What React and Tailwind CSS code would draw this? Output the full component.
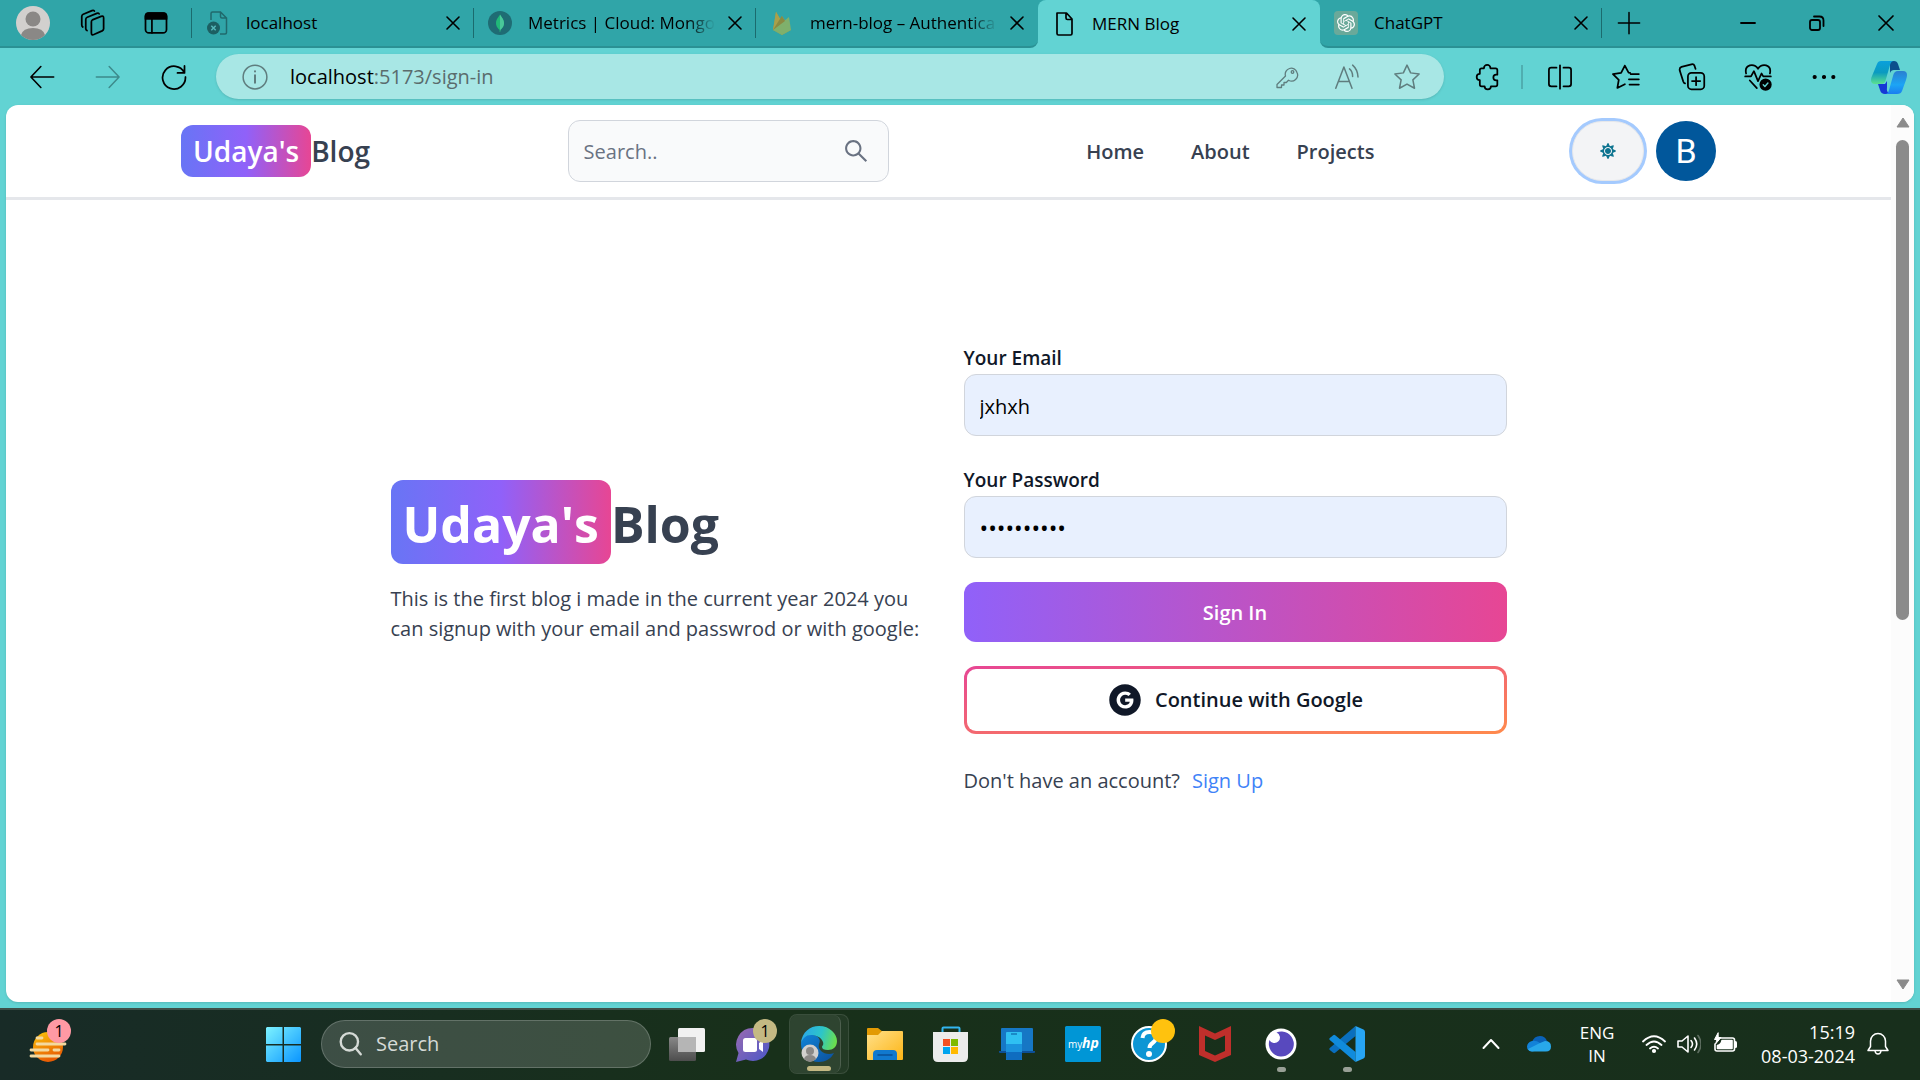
import React from "react";
import { AiOutlineSearch, AiFillGoogleCircle } from "react-icons/ai";
import { FaSun } from "react-icons/fa";
import { SiOpenai } from "react-icons/si";

function Line({ size = "size-[30px]", className = "", children, sw = 1.3 }) {
  return (
    <svg
      viewBox="0 0 24 24"
      fill="none"
      stroke="currentColor"
      strokeWidth={sw}
      strokeLinecap="round"
      strokeLinejoin="round"
      aria-hidden="true"
      className={`${size} shrink-0 ${className}`}
    >
      {children}
    </svg>
  );
}

/* ---------- tab strip ---------- */

const Cross = () => (
  <Line size="size-6" sw={1.6}>
    <path d="M6 6l12 12M18 6L6 18" />
  </Line>
);

const BrokenPage = () => (
  <svg viewBox="0 0 24 24" className="size-6 shrink-0" fill="none" aria-hidden="true">
    <path d="M5 9V2.500Q5 1 6.500 1h8L20.500 7v14.500q0 1.500-1.500 1.500h-5M14.500 1v4.500q0 1.500 1.500 1.500h4.500" stroke="#20696c" strokeWidth="1.500" />
    <circle cx="7.500" cy="17" r="6.500" fill="#1c5f62" />
    <path d="M5.300 14.800l4.400 4.400m0-4.400l-4.400 4.400" stroke="#56b8ba" strokeWidth="1.500" />
  </svg>
);

const Mongo = () => (
  <svg viewBox="0 0 24 24" className="size-6 shrink-0" aria-hidden="true">
    <circle cx="12" cy="12" r="12" fill="#1f6c74" />
    <path d="M12 3.500c.8 2 4 4.300 4 8.500 0 4-2.600 5.900-3.600 6.800L12.200 21h-.5l-.2-2.200C10.500 17.900 8 16 8 12c0-4.200 3.200-6.500 4-8.500z" fill="#21b978" />
    <path d="M12 3.500c.8 2 4 4.300 4 8.500 0 4-2.600 5.900-3.600 6.800L12 21z" fill="#4ac79a" />
  </svg>
);

const Firebase = () => (
  <svg viewBox="0 0 24 24" className="size-6 shrink-0" aria-hidden="true">
    <path d="M3 19L6 .800l4 7.200 2-3 9 14-9 5z" fill="#9c9a4c" />
    <path d="M3 19L6 .800 12.500 12z" fill="#aaa04a" />
    <path d="M3 19L19 6l2 13-9 5z" fill="#7fb06c" />
    <path d="M3 19l8.800-14L15 10z" fill="#8a8a42" />
  </svg>
);

const Page = () => (
  <Line size="size-6" sw={1.7}>
    <path d="M5 1h9.500L20 7v14.500q0 1.500-1.500 1.500h-12Q5 23 5 21.500zM14 1v5q0 1.500 1.500 1.500H20" />
  </Line>
);

const Gpt = () => (
  <span className="flex size-6 shrink-0 items-center justify-center rounded bg-[#6aa99a] text-white">
    <SiOpenai className="size-[18px]" />
  </span>
);

function Tab({ icon, title, active, fade, divider = true }) {
  return (
    <div
      className={`flex h-12 w-[282px] min-w-0 items-center gap-4 pl-[14px] ${
        active ? "rounded-t-lg bg-[#62d3d3]" : ""
      }`}
    >
      {icon}
      <span
        className={`min-w-0 flex-1 whitespace-nowrap text-[17px] leading-6 ${
          fade ? "mask-[linear-gradient(to_right,black_85%,transparent)]" : ""
        }`}
      >
        {title}
      </span>
      <button type="button" aria-label={`Close ${title}`} className="-ml-2">
        <Cross />
      </button>
      <span className={`-ml-2 h-[30px] w-px ${divider ? "bg-[#1b6b6e]" : ""}`} />
    </div>
  );
}

function TabStrip() {
  return (
    <div className="flex h-12 bg-[linear-gradient(#30a5a8_50%,#62d3d3_50%)]">
      <div className="flex min-w-0 items-center rounded-br-lg border-b-2 border-[#2a9194] bg-[#30a5a8]">
        <button type="button" aria-label="Profile" className="ml-4 shrink-0">
          <svg viewBox="0 0 34 34" className="size-[34px]" aria-hidden="true">
            <circle cx="17" cy="17" r="17" fill="#d2d0ce" />
            <circle cx="17" cy="13" r="7.500" fill="#8a8886" />
            <path d="M5 29q2-7 12-7t12 7q-5 5-12 5T5 29z" fill="#8a8886" />
          </svg>
        </button>
        <button type="button" aria-label="Workspaces" className="ml-7">
          <Line size="size-[30px]" sw={1.4}>
            <path d="M11.500 9.500l7-2.800q2-.7 2 1.200v8.600q0 1.200-1.200 1.800l-6.600 2.900q-2 .8-2-1.200v-8.700q0-1.300.8-1.800z" />
            <path d="M7.200 18q-1-.5-1-1.700V9.200q0-1.300 1.200-1.800L15 4.300q1.300-.5 1.900.4M3.800 15.200Q3 14.600 3 13.400V6.800Q3 5.600 4.200 5l7-2.900q1.200-.5 1.900.3" />
          </Line>
        </button>
        <button type="button" aria-label="Tab actions" className="ml-[33px]">
          <Line size="size-[28px]" className="mx-px" sw={1.5}>
            <rect x="3" y="3.500" width="18" height="17" rx="3" />
            <path d="M3 8.500V6q0-2.500 2.500-2.500h13Q21 3.500 21 6v2.500z" fill="currentColor" />
            <path d="M8.500 9v11.500" />
          </Line>
        </button>
        <span className="ml-5 h-[30px] w-px shrink-0 bg-[#1b6b6e]" />
        <Tab icon={<BrokenPage />} title="localhost" />
        <Tab icon={<Mongo />} title="Metrics | Cloud: Mongo" fade />
        <Tab icon={<Firebase />} title="mern-blog – Authentica" fade divider={false} />
      </div>
      <Tab icon={<Page />} title="MERN Blog" active divider={false} />
      <div className="flex min-w-0 flex-1 items-center rounded-bl-lg border-b-2 border-[#2a9194] bg-[#30a5a8]">
        <Tab icon={<Gpt />} title="ChatGPT" />
        <button type="button" aria-label="New tab" className="ml-3">
          <Line size="size-[30px]" sw={1.2}>
            <path d="M12 3.500v17M3.500 12h17" />
          </Line>
        </button>
        <div className="ml-auto flex h-full shrink-0">
          <button type="button" aria-label="Minimize" className="flex w-[69px] items-center justify-center">
            <Line size="size-6" sw={1.8}>
              <path d="M5 12h14" />
            </Line>
          </button>
          <button type="button" aria-label="Restore" className="flex w-[69px] items-center justify-center">
            <Line size="size-6" sw={1.8}>
              <rect x="5" y="9" width="10" height="10" rx="2" />
              <path d="M9 5.500h5.500q4 0 4 4V15" />
            </Line>
          </button>
          <button type="button" aria-label="Close window" className="flex w-[69px] items-center justify-center">
            <Line size="size-6" sw={1.7}>
              <path d="M5 5l14 14M19 5L5 19" />
            </Line>
          </button>
        </div>
      </div>
    </div>
  );
}

/* ---------- address bar ---------- */

function ToolButton({ label, children, className = "w-[66px]" }) {
  return (
    <button type="button" aria-label={label} className={`flex shrink-0 items-center justify-center ${className}`}>
      {children}
    </button>
  );
}

const Copilot = () => (
  <svg viewBox="0 0 36 34" className="h-[34px] w-9" aria-hidden="true">
    <defs>
      <linearGradient id="cpA" x1="0" y1="0" x2="0" y2="1">
        <stop offset="0" stopColor="#0aa0dc" />
        <stop offset=".5" stopColor="#0b9bc0" />
        <stop offset="1" stopColor="#5be08f" />
      </linearGradient>
      <linearGradient id="cpB" x1="0" y1="0" x2="0" y2="1">
        <stop offset="0" stopColor="#2a7fd0" />
        <stop offset=".6" stopColor="#1ca5f5" />
        <stop offset="1" stopColor="#1a7df0" />
      </linearGradient>
    </defs>
    <path d="M19 1h4q3 0 4 3l2 6h-6q-3 0-4 3z" fill="#0b4f8c" />
    <path d="M7 24h7l2-3v6q-1 6 4 7h-6q-4 0-5-4z" fill="#1538d6" />
    <path d="M10 1h13q-3 0-4 4l-4 14q-1 5-5 5H4q-4 0-4-4 0-2 1-4L6 4q1-3 4-3z" fill="url(#cpA)" />
    <path d="M26 34H14q3 0 4-4l4-14q1-5 5-5h5q4 0 4 4 0 2-1 5l-4 11q-1 3-5 3z" fill="url(#cpB)" />
  </svg>
);

function Toolbar() {
  return (
    <div className="flex h-[57px] shrink-0 items-center bg-[#62d3d3]">
      <ToolButton label="Back" className="ml-[9px] w-[66px]">
        <Line size="size-7" sw={1.4}>
          <path d="M22 12H3M11 3L2.500 12l8.500 9" />
        </Line>
      </ToolButton>
      <ToolButton label="Forward" className="w-[66px] text-[#3d8b8c]">
        <Line size="size-7" sw={1.3}>
          <path d="M2 12H21M13 3l8.500 9-8.500 9" />
        </Line>
      </ToolButton>
      <ToolButton label="Refresh">
        <Line size="size-7" sw={1.5}>
          <path d="M20.800 8.200A9.800 9.800 0 1 0 21.800 12M21 2.500v6h-6" />
        </Line>
      </ToolButton>
      <div className="ml-[9px] flex h-[45px] min-w-0 flex-1 items-center rounded-full bg-[#a8e7e5] pl-6 text-[#5f7d7e] shadow-sm">
        <Line sw={1.2}>
          <circle cx="12" cy="12" r="9.500" />
          <path d="M12 10.500v6M12 7.400v.2" strokeWidth="1.600" />
        </Line>
        <button type="button" aria-label="Address" className="ml-5 flex-1 truncate text-left text-[20px] leading-7 text-[#5a6c6d]">
          <span className="text-black">localhost</span>:5173/sign-in
        </button>
        <button type="button" aria-label="Saved passwords" className="w-[60px]">
          <Line size="size-6" className="mx-auto" sw={1.3}>
            <path d="M22 7.500A6 6 0 1 0 10.500 11L2 19.500V22.500h4.500V20H9v-2.500h2.300l2.200-2.300A6 6 0 0 0 22 7.500z" />
            <circle cx="17.500" cy="7" r="1.300" />
          </Line>
        </button>
        <button type="button" aria-label="Read aloud" className="w-[60px]">
          <Line size="size-[30px]" className="mx-auto" sw={1.2}>
            <path d="M3 21L9.500 4 16 21M5.200 15.500h8.600M14 5.500q2.500 2 2.500 6M16.500 2.500q4 3.500 4.300 9.500" />
          </Line>
        </button>
        <button type="button" aria-label="Add to favorites" className="mr-[7px] w-[60px]">
          <Line className="mx-auto" sw={1.2}>
            <path d="M12 2.500l2.900 6.200 6.800.9-5 4.700 1.300 6.700-6-3.300L6 21l1.300-6.700-5-4.700 6.800-.9z" />
          </Line>
        </button>
      </div>
      <ToolButton label="Extensions" className="ml-[11px] w-[66px]">
        <Line size="size-7" sw={1.5}>
          <path d="M8.500 4.500a2.800 2.800 0 0 1 5.600 0H18.500q1.500 0 1.500 1.500v4h-1a2.400 2.400 0 0 0 0 4.800h1V18.500q0 1.500-1.500 1.500H14.500a2.700 2.700 0 0 1-5.400 0H6.500Q5 20 5 18.500v-3.800a2.700 2.700 0 0 1 0-5.400V6q0-1.500 1.500-1.500z" />
        </Line>
      </ToolButton>
      <span className="mr-1 h-6 w-0.5 bg-[#50aeb0]" />
      <ToolButton label="Split screen">
        <Line size="size-7" sw={1.5}>
          <path d="M9 4H4.500q-2 0-2 2v12q0 2 2 2H9M15 4h4.500q2 0 2 2v12q0 2-2 2H15M12 2v20" />
        </Line>
      </ToolButton>
      <ToolButton label="Favorites">
        <Line size="size-7" sw={1.5}>
          <path d="M15.500 8.500L14.200 8.300 11 2.200 7.800 8.500.8 9.500l5 4.900-1.200 7 6.400-3.200M16 9.500h7M14.500 14H23M15 18.500h8" />
        </Line>
      </ToolButton>
      <ToolButton label="Collections">
        <Line size="size-7" sw={1.5}>
          <rect x="8.500" y="8.500" width="14" height="14" rx="3" />
          <path d="M15.500 12v7M12 15.500h7M6 17.500q-1-.3-1.500-1.700L1.500 6.500Q1 4 3 3.300l8.500-2.200q2-.5 2.700 1.400L15 5" />
        </Line>
      </ToolButton>
      <ToolButton label="Browser essentials">
        <Line size="size-7" sw={1.5}>
          <path d="M1.800 9Q.500 3.500 5 2q4.500-1 7 3 2.500-4 7-3 4.500 1.500 3.200 7M1 11.500h5l2.500-4.500 3.500 8.500L15 9l1.500 2.500H23M5 15l6 6.500" />
          <circle cx="18.500" cy="18.500" r="4.500" fill="currentColor" />
          <path d="M16.500 18.700l1.400 1.400 2.600-3" stroke="#62d3d3" strokeWidth="1.200" />
        </Line>
      </ToolButton>
      <ToolButton label="Settings and more">
        <Line size="size-7" sw={1}>
          <g fill="currentColor">
            <circle cx="4" cy="12" r="1.300" />
            <circle cx="12" cy="12" r="1.300" />
            <circle cx="20" cy="12" r="1.300" />
          </g>
        </Line>
      </ToolButton>
      <ToolButton label="Copilot" className="w-[63px]">
        <Copilot />
      </ToolButton>
    </div>
  );
}

/* ---------- blog page ---------- */

function Navbar() {
  return (
    <header className="border-b-[3px] border-gray-200 px-[175px]">
      <div className="flex h-[92px] items-center justify-between">
        <a href="#home" className="flex items-center whitespace-nowrap text-[28px] font-semibold text-[#374151]">
          <span className="flex h-[52px] items-center rounded-xl bg-linear-to-r/srgb from-[#6875f5] via-[#9061f9] to-[#e74694] px-3 text-white">
            Udaya's
          </span>
          Blog
        </a>
        <form className="flex h-[62px] w-[321px] items-center rounded-xl border border-gray-300 bg-gray-50 pl-[15px] pr-[18px]">
          <input
            type="text"
            aria-label="Search"
            placeholder="Search.."
            className="min-w-0 flex-1 bg-transparent pt-0.5 text-[20px] outline-none placeholder:text-gray-500"
          />
          <AiOutlineSearch className="size-[28px] text-gray-500" />
        </form>
        <nav className="flex gap-[47px] pt-0.5 text-[20px] font-semibold text-[#374151]">
          <a href="#home">Home</a>
          <a href="#about">About</a>
          <a href="#projects">Projects</a>
        </nav>
        <div className="flex items-center gap-3">
          <button
            type="button"
            aria-label="Toggle theme"
            className="flex h-[60px] w-[72px] items-center justify-center rounded-full border border-gray-200 bg-gray-100 text-[#0e7490] ring-3 ring-[#a4cafe]"
          >
            <FaSun className="size-4" />
          </button>
          <button
            type="button"
            aria-label="Account"
            className="flex size-[60px] items-center justify-center rounded-full bg-[#01579b] font-[Roboto] text-[34px] leading-none text-white"
          >
            B
          </button>
        </div>
      </div>
    </header>
  );
}

const field =
  "h-[62px] w-full rounded-xl border border-gray-300 bg-[#e8f0fe] px-[15px] pt-0.5 text-black outline-none";

function SignIn() {
  return (
    <main className="mx-auto flex w-full max-w-[1152px] items-center gap-[30px] px-[18px] pt-[143px]">
      <section className="flex-1 pb-4">
        <h1 className="flex items-center text-[50px] font-bold text-[#374151]">
          <span className="flex h-[84px] items-center rounded-xl bg-linear-to-r/srgb from-[#6875f5] via-[#9061f9] to-[#e74694] px-3 pt-1.5 text-white">
            Udaya's
          </span>
          <span className="pt-1.5">Blog</span>
        </h1>
        <p className="mt-5 whitespace-nowrap text-[20px] leading-[30px] text-[#374151]">
          This is the first blog i made in the current year 2024 you
          <br />
          can signup with your email and passwrod or with google:
        </p>
      </section>
      <section className="flex-1">
        <form className="flex flex-col gap-6">
          <div>
            <label htmlFor="email" className="block text-[19px] font-semibold leading-[31px] text-gray-900">
              Your Email
            </label>
            <input id="email" type="text" defaultValue="jxhxh" className={`${field} text-[20px]`} />
          </div>
          <div className="mt-[5px]">
            <label htmlFor="password" className="block text-[19px] font-semibold leading-[31px] text-gray-900">
              Your Password
            </label>
            <input id="password" type="password" defaultValue="abcdefghij" className={`${field} text-[23px]`} />
          </div>
          <button
            type="submit"
            className="h-[60px] rounded-xl bg-linear-to-r/srgb from-[#9061f9] to-[#e74694] pt-0.5 text-[20px] font-semibold text-white"
          >
            Sign In
          </button>
          <button type="button" className="h-[68px] rounded-xl bg-linear-to-br/srgb from-[#e74694] to-[#ff8a4c] p-[3px]">
            <span className="flex h-full items-center justify-center gap-3 rounded-[9px] bg-white text-[20px] font-semibold text-gray-900">
              <AiFillGoogleCircle className="size-9" />
              Continue with Google
            </span>
          </button>
        </form>
        <p className="mt-8 text-[20px] leading-[30px] text-[#374151]">
          Don't have an account?
          <a href="#sign-up" className="ml-3 text-[#3f83f8]">
            Sign Up
          </a>
        </p>
      </section>
    </main>
  );
}

function Viewport() {
  return (
    <div className="min-h-0 flex-1 bg-[#62d3d3] px-1.5 pb-1.5">
      <div className="flex h-full overflow-hidden rounded-xl bg-white shadow-sm">
        <div className="min-w-0 flex-1 overflow-hidden">
          <Navbar />
          <SignIn />
        </div>
        <div className="flex w-[23px] flex-col items-center bg-[#fcfcfc] py-3 text-[#8b8b8b]">
          <svg viewBox="0 0 14 11" className="h-[11px] w-3.5" aria-hidden="true">
            <path d="M7 1l6 9H1z" fill="currentColor" stroke="currentColor" strokeLinejoin="round" />
          </svg>
          <div className="my-3 flex min-h-0 w-[13px] flex-1 flex-col">
            <div className="h-[58%] rounded-full bg-[#8b8b8b]" />
          </div>
          <svg viewBox="0 0 14 11" className="h-[11px] w-3.5" aria-hidden="true">
            <path d="M7 10l6-9H1z" fill="currentColor" stroke="currentColor" strokeLinejoin="round" />
          </svg>
        </div>
      </div>
    </div>
  );
}

/* ---------- taskbar ---------- */

function App36({ label, children, dot, badge }) {
  return (
    <button type="button" aria-label={label} className="relative flex h-[60px] w-[66px] shrink-0 items-center justify-center">
      <svg viewBox="0 0 36 36" className="size-9 overflow-visible" aria-hidden="true">
        {children}
      </svg>
      {badge && (
        <span className="absolute right-[9px] top-[5px] flex size-6 items-center justify-center rounded-full bg-[#c4b983] text-[16px] leading-none text-black">
          {badge}
        </span>
      )}
      {dot && <span className="absolute bottom-0.5 h-[5px] w-[9px] rounded-full bg-[#98a096]" />}
    </button>
  );
}

function EdgeButton() {
  return (
    <button type="button" aria-label="Microsoft Edge" className="relative mx-[3px] flex h-[60px] w-[60px] shrink-0 rounded-lg border border-white/10 bg-white/5 pr-[7px]">
      <span className="flex h-full w-[52px] items-center justify-center rounded-lg border-r border-white/15 bg-white/5 pl-2">
        <svg viewBox="0 0 36 36" className="size-9 shrink-0" aria-hidden="true">
          <defs>
            <linearGradient id="edA" x1="0" y1=".3" x2="1" y2=".5">
              <stop offset="0" stopColor="#2aa7ea" />
              <stop offset=".55" stopColor="#2dc5c8" />
              <stop offset="1" stopColor="#6be04c" />
            </linearGradient>
            <linearGradient id="edB" x1="0" y1="0" x2="1" y2="1">
              <stop offset="0" stopColor="#0f84d8" />
              <stop offset="1" stopColor="#0c4f9c" />
            </linearGradient>
          </defs>
          <path d="M0 18C0 11 6 8 12 9c6 1 8 5 6 9-2 7 7 12 15 9-3 6-9 9-15 9C8 36 0 28 0 18z" fill="url(#edB)" />
          <path d="M0 17C1 6 9 0 18 0c11 0 18 8 18 15 0 6-4 9-9 9-4 0-6-1-6-3 0-1 2-2 1-5-2-5-7-7-12-7-5 0-8 3-10 8z" fill="url(#edA)" />
          <circle cx="9" cy="27" r="8.500" fill="#d2d0ce" />
          <circle cx="9" cy="25" r="4" fill="#8a8886" />
          <path d="M3 33q1-4 6-4t6 4q-3 3-6 3t-6-3z" fill="#8a8886" />
        </svg>
      </span>
      <span className="absolute bottom-0.5 left-[17px] h-[5px] w-6 rounded-full bg-[#c4b983]" />
    </button>
  );
}

function Taskbar() {
  return (
    <footer className="flex h-[72px] shrink-0 items-center border-t-2 border-[#3d4f48] bg-linear-to-r from-[#182b27] via-[#18301a] via-40% to-[#182f1c] pb-0.5 text-white">
      <button type="button" aria-label="Weather" className="relative ml-7 h-[50px] w-12 shrink-0">
        <svg viewBox="0 0 48 50" className="h-[50px] w-12" aria-hidden="true">
          <defs>
            <linearGradient id="sun" x1="0" y1="0" x2=".4" y2="1">
              <stop offset="0" stopColor="#fbc60a" />
              <stop offset="1" stopColor="#e85d04" />
            </linearGradient>
          </defs>
          <circle cx="20" cy="28" r="15" fill="url(#sun)" />
          <g stroke="#f3d9a0" strokeWidth="2.800" strokeLinecap="round">
            <path d="M9 19h5M9 25h28M3 31h17M26 31h5M3 37h28" />
          </g>
        </svg>
        <span className="absolute left-[19px] top-0 flex size-6 items-center justify-center rounded-full bg-[#ff99a4] text-[16px] leading-none text-black">1</span>
      </button>
      <div className="flex min-w-0 items-center pl-[157px]">
        <button type="button" aria-label="Start" className="flex w-[66px] shrink-0 justify-start pl-[33px]">
          <svg viewBox="0 0 35 35" className="size-[35px] shrink-0" aria-hidden="true">
            <defs>
              <linearGradient id="win" gradientUnits="userSpaceOnUse" x1="0" y1="0" x2="35" y2="35">
                <stop offset="0" stopColor="#7df3ff" />
                <stop offset="1" stopColor="#0a95ff" />
              </linearGradient>
            </defs>
            <path d="M1 0h15.500v17H0V1zM18 0h16l1 1v16H18zM0 18.500h16.500V35H1l-1-1zM18 18.500h17V34l-1 1H18z" fill="url(#win)" />
          </svg>
        </button>
        <button type="button" className="ml-[22px] flex h-12 w-[330px] items-center gap-3 rounded-full border border-white/20 bg-white/16 pl-[15px] text-[20px] text-[#d5dad6]">
          <Line size="size-[26px]" className="ml-px" sw={2.200}>
            <circle cx="10.500" cy="10" r="8" />
            <path d="M16 15.500l5 6" />
          </Line>
          Search
        </button>
        <div className="ml-[3px] flex items-center">
          <App36 label="Task view">
            <defs>
              <linearGradient id="tv" x1="0" y1="0" x2="0" y2="1">
                <stop offset="0" stopColor="#888" />
                <stop offset="1" stopColor="#4d4d4d" />
              </linearGradient>
            </defs>
            <rect x="0" y="11" width="27" height="24" rx="1.500" fill="url(#tv)" />
            <rect x="9" y="2" width="27" height="24" rx="1.500" fill="#f1f1f1" />
            <path d="M9 11h18v15H10q-1 0-1-1z" fill="#b5b5b5" />
          </App36>
          <App36 label="Chat" badge="1">
            <defs>
              <linearGradient id="chat" x1="0" y1="0" x2="1" y2="1">
                <stop offset="0" stopColor="#9a6bb0" />
                <stop offset="1" stopColor="#4a57c8" />
              </linearGradient>
            </defs>
            <path d="M18 2a16.500 16.500 0 1 1-7 31.500L1 36l2.500-9A16.500 16.500 0 0 1 18 2z" fill="url(#chat)" />
            <rect x="8" y="12" width="14" height="14" rx="2.500" fill="#fff" />
            <path d="M24 17l4-3v12l-4-3z" fill="#fff" />
          </App36>
          <EdgeButton />
          <App36 label="File Explorer">
            <defs>
              <linearGradient id="fe" x1="0" y1="0" x2="1" y2="1">
                <stop offset="0" stopColor="#ffe08a" />
                <stop offset="1" stopColor="#fdb515" />
              </linearGradient>
            </defs>
            <path d="M0 3q0-1 1-1h10l5 4v6H0z" fill="#e29a04" />
            <path d="M0 9h11l4-4h20q1 0 1 1v27q0 1-1 1H1q-1 0-1-1z" fill="url(#fe)" />
            <path d="M6 34v-6q0-4 4-4h16q4 0 4 4v6z" fill="#1179cf" />
            <path d="M11 29h14" stroke="#0a4f96" strokeWidth="1.500" strokeLinecap="round" />
          </App36>
          <App36 label="Microsoft Store">
            <path d="M9.500 8V2.500q0-1 1-1h15q1 0 1 1V8" fill="none" stroke="#32b5f0" strokeWidth="2" />
            <path d="M0 6h35v25q0 5-5 5H5q-5 0-5-5z" fill="#ececec" />
            <rect x="10" y="13" width="7" height="7" fill="#f25022" />
            <rect x="18" y="13" width="7" height="7" fill="#7fba00" />
            <rect x="10" y="21" width="7" height="7" fill="#00a4ef" />
            <rect x="18" y="21" width="7" height="7" fill="#ffb900" />
          </App36>
          <App36 label="Phone Link">
            <path d="M2 3q0-1 1-1h30q1 0 1 1v22H2z" fill="#1677c5" />
            <path d="M0 25h36v1q0 1-1 1H1q-1 0-1-1z" fill="#0d4f97" />
            <rect x="7" y="6" width="16" height="28" rx="1" fill="#2fc0f2" />
            <path d="M7 18h16v9H7z" fill="#1b93dd" />
            <path d="M7 26h16v7q0 1-1 1H8q-1 0-1-1z" fill="#0f6dc0" />
            <path d="M12 8h6" stroke="#1479b9" strokeWidth="1.500" />
          </App36>
          <App36 label="myHP">
            <rect width="36" height="36" rx="1.500" fill="#0096d6" />
            <text x="3" y="22" fontSize="10" fill="#fff">my</text>
            <text x="17" y="22" fontSize="14" fontWeight="700" fontStyle="italic" fill="#fff">hp</text>
          </App36>
          <App36 label="HP Support Assistant">
            <circle cx="18" cy="18" r="17" fill="#0d96d4" stroke="#fff" strokeWidth="2" />
            <path d="M11.500 12q.5-6 7-6 6.500 0 6.500 5.500 0 3-3.500 5.500-3 2-3 5" fill="none" stroke="#fff" strokeWidth="4" />
            <circle cx="18" cy="28" r="3" fill="#fff" />
            <circle cx="32" cy="5" r="12" fill="#ffc20e" />
          </App36>
          <App36 label="McAfee">
            <path fillRule="evenodd" d="M2 0l16 7.500L34 0v29l-16 7-16-7zM8 9.500V25l10 4.500L28 25V9.500L18 14z" fill="#bf2f2b" />
          </App36>
          <App36 label="Insomnia" dot>
            <circle cx="18" cy="18" r="15.500" fill="#fff" />
            <path d="M13.500 6.500A12.500 12.500 0 1 1 6.500 14 5.500 5.500 0 1 0 13.500 6.500z" fill="#5849be" />
          </App36>
          <App36 label="Visual Studio Code" dot>
            <path d="M26.500 0v10L6.200 26.800q-1 .8-2 0L.8 24q-1.200-1 0-2z" fill="#0a6fbe" />
            <path d="M26.500 36V26L6.200 9.200q-1-.8-2 0L.8 12q-1.200 1 0 2z" fill="#108bdc" />
            <path d="M26.500 0L34.500 3.500q1.500.7 1.500 2.500v24q0 1.800-1.500 2.500l-8 3.500z" fill="#27a5f4" />
          </App36>
        </div>
      </div>
      <div className="ml-auto flex shrink-0 items-center pr-[30px]">
        <Line size="size-6" sw={2}>
          <path d="M4.500 16l7.500-8 7.500 8" />
        </Line>
        <svg viewBox="0 0 24 16" className="ml-6 h-4 w-6" aria-hidden="true">
          <path d="M5 6q2-6 8-6 5 0 7 5L12 11 2 12z" fill="#0a62b8" />
          <path d="M5 5q4-1 8 2l10 5-18 3.500q-5-.5-5-5Q.500 6 5 5z" fill="#1282d8" />
          <path d="M1 13l12-6 5-2q6 0 6 5.500 0 5-5 5H5q-3 0-4-2.500z" fill="#28a8ea" />
        </svg>
        <div className="ml-4 w-[60px] text-center text-[17px] leading-[23px]">
          ENG
          <br />
          IN
        </div>
        <Line size="size-6" className="ml-[15px]" sw={1.8}>
          <path d="M1 9.500q11-10.500 22 0M4.500 13q7.500-7 15 0M8 16.500q4-3.500 8 0" />
          <circle cx="12" cy="19" r="1.200" fill="currentColor" />
        </Line>
        <Line size="size-6" className="ml-[11px]" sw={1.600}>
          <path d="M1 9h4l6-5v16l-6-5H1zM14 8.500q3 3.500 0 7M17.500 6q4.500 6 0 12" />
          <path d="M21 3.500q6 8.500 0 17" opacity=".3" />
        </Line>
        <Line size="size-6" className="ml-3" sw={1.600}>
          <path d="M7 6h12.500q2 0 2 2v9q0 2-2 2H4q-2 0-2-2v-5" />
          <path d="M9 8.500h10v8H4.500v-3q4-1 4.500-5z" fill="currentColor" />
          <path d="M22.500 10.500v4" strokeWidth="3" />
          <path d="M5 1L1.500 7.500H4L2.500 12 8 5.500H5.500z" fill="currentColor" strokeWidth="1" />
        </Line>
        <div className="ml-6 text-right text-[18px] leading-6">
          15:19
          <br />
          08-03-2024
        </div>
        <Line size="size-6" className="ml-[11px]" sw={1.500}>
          <path d="M2 18.500h20l-2.500-4V9a7.500 7.500 0 0 0-15 0v5.500zM9 19q.5 3 3 3t3-3" />
        </Line>
      </div>
    </footer>
  );
}

export default function App() {
  return (
    <div className="flex h-screen flex-col overflow-hidden bg-[#62d3d3] font-['Open_Sans','Noto_Sans',sans-serif] text-black">
      <TabStrip />
      <Toolbar />
      <Viewport />
      <Taskbar />
    </div>
  );
}
